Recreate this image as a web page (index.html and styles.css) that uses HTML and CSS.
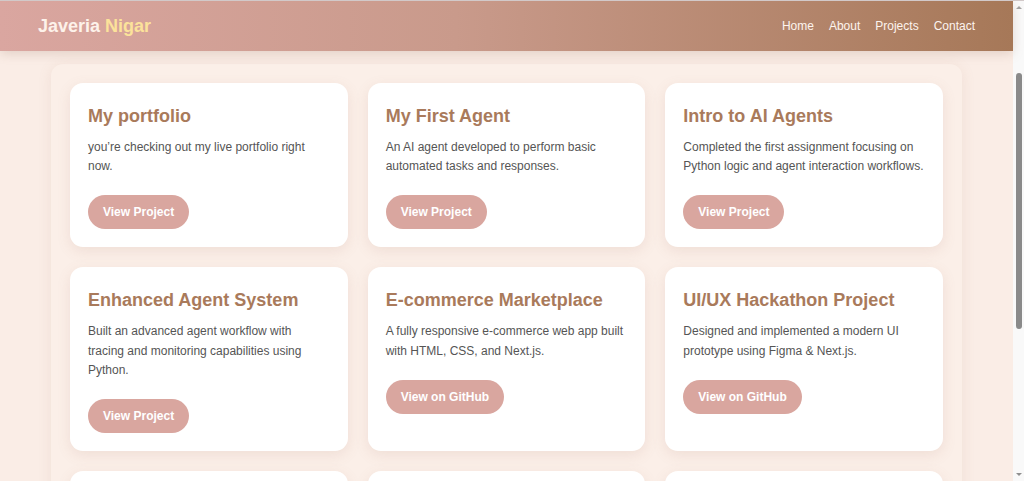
FILE: index.html
```html
<!DOCTYPE html>
<html lang="en">
<head>
<meta charset="UTF-8">
<meta name="viewport" content="width=device-width, initial-scale=1.0">
<title>Javeria Nigar | Projects</title>
<link rel="stylesheet" href="styles.css">
</head>
<body>
  <div class="page">
    <header class="site-header">
      <div class="logo">Javeria <span class="logo-accent">Nigar</span></div>
      <nav class="nav">
        <a href="#home">Home</a>
        <a href="#about">About</a>
        <a href="#projects">Projects</a>
        <a href="#contact">Contact</a>
      </nav>
    </header>

    <main class="main">
      <section class="projects" id="projects">
        <article class="card">
          <h3 class="card-title">My portfolio</h3>
          <p class="card-text">you’re checking out my live portfolio right now.</p>
          <a class="btn" href="#">View Project</a>
        </article>
        <article class="card">
          <h3 class="card-title">My First Agent</h3>
          <p class="card-text">An AI agent developed to perform basic automated tasks and responses.</p>
          <a class="btn" href="#">View Project</a>
        </article>
        <article class="card">
          <h3 class="card-title">Intro to AI Agents</h3>
          <p class="card-text">Completed the first assignment focusing on Python logic and agent interaction workflows.</p>
          <a class="btn" href="#">View Project</a>
        </article>

        <article class="card">
          <h3 class="card-title">Enhanced Agent System</h3>
          <p class="card-text">Built an advanced agent workflow with tracing and monitoring capabilities using Python.</p>
          <a class="btn" href="#">View Project</a>
        </article>
        <article class="card">
          <h3 class="card-title">E-commerce Marketplace</h3>
          <p class="card-text">A fully responsive e-commerce web app built with HTML, CSS, and Next.js.</p>
          <a class="btn" href="#">View on GitHub</a>
        </article>
        <article class="card">
          <h3 class="card-title">UI/UX Hackathon Project</h3>
          <p class="card-text">Designed and implemented a modern UI prototype using Figma &amp; Next.js.</p>
          <a class="btn" href="#">View on GitHub</a>
        </article>

        <article class="card">
          <h3 class="card-title">Resume Builder</h3>
          <p class="card-text">A dynamic resume generator built with TypeScript and a clean printable layout.</p>
          <a class="btn" href="#">View on GitHub</a>
        </article>
        <article class="card">
          <h3 class="card-title">Weather App</h3>
          <p class="card-text">Fetches live forecasts from a public API and shows them in a simple dashboard.</p>
          <a class="btn" href="#">View on GitHub</a>
        </article>
        <article class="card">
          <h3 class="card-title">Todo List CLI</h3>
          <p class="card-text">A command-line task manager written in Python with saved progress.</p>
          <a class="btn" href="#">View on GitHub</a>
        </article>
      </section>
    </main>

    <footer class="site-footer" id="contact">
      <p class="footer-text">© 2025 Javeria Nigar. All rights reserved.</p>
    </footer>
  </div>

  <div class="scrollbar" aria-hidden="true">
    <span class="scroll-arrow scroll-arrow-up"></span>
    <div class="scroll-track">
      <div class="scroll-thumb"></div>
    </div>
    <span class="scroll-arrow scroll-arrow-down"></span>
  </div>
</body>
</html>
```

FILE: styles.css
```css
* {
  box-sizing: border-box;
}

body {
  margin: 0;
  display: flex;
  align-items: flex-start;
  font-family: "Liberation Sans", Arial, sans-serif;
  line-height: 1.5;
  color: #555;
  background: #faede6;
}

.page {
  flex: 1;
  min-width: 0;
}

/* slim window scrollbar on the right */
.scrollbar {
  position: sticky;
  top: 0;
  width: 11px;
  height: 100vh;
  flex-shrink: 0;
  display: flex;
  flex-direction: column;
  align-items: center;
  background: #f9f9f9;
  border-top: 1px solid #d2c9c9;
}

.scroll-arrow {
  width: 0;
  height: 0;
  margin: 5px 0;
  border-left: 3px solid transparent;
  border-right: 3px solid transparent;
}

.scroll-arrow-up {
  border-bottom: 3px solid #a3a3a3;
}

.scroll-arrow-down {
  border-top: 3px solid #8f8f8f;
}

.scroll-track {
  flex: 1;
  width: 100%;
  display: flex;
  justify-content: center;
}

.scroll-thumb {
  width: 6px;
  height: 256px;
  margin-top: 59px;
  background: #8a8a8a;
  border-radius: 3px;
}

/* header bar */
.site-header {
  height: 51px;
  display: flex;
  align-items: center;
  justify-content: space-between;
  padding: 0 38px;
  background: linear-gradient(90deg, #daa6a0 0%, #c99a8b 45%, #a67858 100%);
  border-top: 1px solid #d2c9c9;
  box-shadow: 0 3px 10px rgba(150, 110, 90, 0.22);
  position: relative;
  z-index: 1;
}

.logo {
  font-size: 18px;
  font-weight: 700;
  color: #fdf2ea;
  line-height: 1;
}

.logo-accent {
  color: #fce29a;
}

.nav {
  display: flex;
  gap: 15px;
}

.nav a {
  color: #fdf4ee;
  text-decoration: none;
  font-size: 12px;
}

/* projects grid */
.main {
  padding: 13px 0;
}

.projects {
  width: 911px;
  margin: 0 auto;
  padding: 19px;
  display: grid;
  grid-template-columns: repeat(3, 1fr);
  gap: 20px;
  background: #fbefe8;
  border-radius: 12px;
  box-shadow: 0 2px 14px rgba(170, 120, 95, 0.12);
}

.card {
  background: #fff;
  border-radius: 13px;
  padding: 20px 18px 18px;
  display: flex;
  flex-direction: column;
  align-items: flex-start;
  box-shadow: 0 4px 14px rgba(160, 110, 90, 0.13);
}

.card-title {
  margin: 0 0 8px;
  font-size: 18px;
  font-weight: 700;
  line-height: 1.5;
  color: #a97a5b;
}

.card-text {
  margin: 0 0 19px;
  font-size: 12px;
  line-height: 1.6;
  color: #555;
}

.btn {
  display: inline-block;
  padding: 10px 15px;
  font-size: 12px;
  line-height: 14px;
  font-weight: 700;
  color: #fff;
  background: #d9a69f;
  border-radius: 20px;
  text-decoration: none;
}

/* footer */
.site-footer {
  padding: 80px 38px 100px;
  text-align: center;
}

.footer-text {
  margin: 0;
  font-size: 12px;
  color: #a97a5b;
}
```
